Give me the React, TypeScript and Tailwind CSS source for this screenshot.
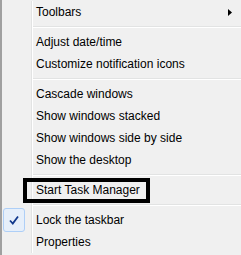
import React from "react";

type Item = { label: string; sub?: boolean; checked?: boolean; boxed?: boolean } | "sep";

const items: Item[] = [
  { label: "Toolbars", sub: true },
  "sep",
  { label: "Adjust date/time" },
  { label: "Customize notification icons" },
  "sep",
  { label: "Cascade windows" },
  { label: "Show windows stacked" },
  { label: "Show windows side by side" },
  { label: "Show the desktop" },
  "sep",
  { label: "Start Task Manager", boxed: true },
  "sep",
  { label: "Lock the taskbar", checked: true },
  { label: "Properties" },
];

const Gutter = ({ children }: { children?: React.ReactNode }) => (
  <div className="w-[31px] shrink-0 self-stretch border-r border-r-white">
    <div className="w-full h-full flex items-center pl-[1px] border-r border-r-[#e2e3e3]">{children}</div>
  </div>
);

export default function App() {
  return (
    <div
      className="w-[241px] h-[255px] bg-[#f0f0f0] border-l-2 border-l-[#a0a0a0] flex flex-col pt-[1px] text-black text-[12px] overflow-hidden"
      style={{ fontFamily: '"Liberation Sans", Arial, sans-serif' }}
    >
      {items.map((it, i) =>
        it === "sep" ? (
          <div key={i} className="h-[8px] flex">
            <Gutter />
            <div className="flex-1 flex flex-col pt-[3px]">
              <div className="h-px bg-[#e2e3e3]" />
              <div className="h-px bg-white" />
            </div>
          </div>
        ) : (
          <div key={i} className="h-[22px] flex relative">
            <Gutter>
              {it.checked && (
                <div className="w-[22px] h-[24px] rounded-[3px] border border-[#aecff7] bg-[#e6effa] flex items-center justify-center">
                  <svg width="10" height="10" viewBox="0 0 10 10">
                    <path d="M1 5.5 L3.8 8.5 L9 1.5" fill="none" stroke="#10388c" strokeWidth="1.8" />
                  </svg>
                </div>
              )}
            </Gutter>
            <div className="flex-1 flex items-center pl-[3px] pr-[9px]">
              <span className="flex-1 leading-none">{it.label}</span>
              {it.sub && (
                <svg width="4" height="7" viewBox="0 0 4 7">
                  <path d="M0 0 L4 3.5 L0 7 Z" fill="#000" />
                </svg>
              )}
            </div>
            {it.boxed && (
              <div className="absolute left-[21px] -top-[1px] w-[127px] h-[25px] border-4 border-black" />
            )}
          </div>
        )
      )}
    </div>
  );
}
